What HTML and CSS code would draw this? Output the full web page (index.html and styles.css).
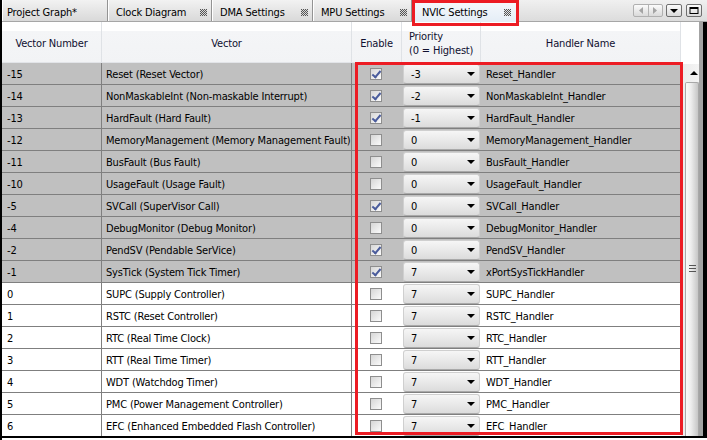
FILE: index.html
```html
<!DOCTYPE html>
<html>
<head>
<meta charset="utf-8">
<link rel="stylesheet" href="styles.css">
</head>
<body>
<div class="window">
  <div class="tabbar">
    <div class="tab t1"><span>Project Graph*</span></div>
    <div class="tab t2"><span>Clock Diagram</span><svg class="x" width="7" height="7" viewBox="0 0 7 7"><rect x="0" y="0" width="7" height="7" fill="#d8d8d8"/><path d="M0 0h1v1H0zM2 0h1v1H2zM4 0h1v1H4zM6 0h1v1H6zM1 1h1v1H1zM3 1h1v1H3zM5 1h1v1H5zM0 2h1v1H0zM2 2h1v1H2zM4 2h1v1H4zM6 2h1v1H6zM1 3h1v1H1zM3 3h1v1H3zM5 3h1v1H5zM0 4h1v1H0zM2 4h1v1H2zM4 4h1v1H4zM6 4h1v1H6zM1 5h1v1H1zM3 5h1v1H3zM5 5h1v1H5zM0 6h1v1H0zM2 6h1v1H2zM4 6h1v1H4zM6 6h1v1H6z" fill="#555"/></svg></div>
    <div class="tab t3"><span>DMA Settings</span><svg class="x" width="7" height="7" viewBox="0 0 7 7"><rect x="0" y="0" width="7" height="7" fill="#d8d8d8"/><path d="M0 0h1v1H0zM2 0h1v1H2zM4 0h1v1H4zM6 0h1v1H6zM1 1h1v1H1zM3 1h1v1H3zM5 1h1v1H5zM0 2h1v1H0zM2 2h1v1H2zM4 2h1v1H4zM6 2h1v1H6zM1 3h1v1H1zM3 3h1v1H3zM5 3h1v1H5zM0 4h1v1H0zM2 4h1v1H2zM4 4h1v1H4zM6 4h1v1H6zM1 5h1v1H1zM3 5h1v1H3zM5 5h1v1H5zM0 6h1v1H0zM2 6h1v1H2zM4 6h1v1H4zM6 6h1v1H6z" fill="#555"/></svg></div>
    <div class="tab t4"><span>MPU Settings</span><svg class="x" width="7" height="7" viewBox="0 0 7 7"><rect x="0" y="0" width="7" height="7" fill="#d8d8d8"/><path d="M0 0h1v1H0zM2 0h1v1H2zM4 0h1v1H4zM6 0h1v1H6zM1 1h1v1H1zM3 1h1v1H3zM5 1h1v1H5zM0 2h1v1H0zM2 2h1v1H2zM4 2h1v1H4zM6 2h1v1H6zM1 3h1v1H1zM3 3h1v1H3zM5 3h1v1H5zM0 4h1v1H0zM2 4h1v1H2zM4 4h1v1H4zM6 4h1v1H6zM1 5h1v1H1zM3 5h1v1H3zM5 5h1v1H5zM0 6h1v1H0zM2 6h1v1H2zM4 6h1v1H4zM6 6h1v1H6z" fill="#555"/></svg></div>
    <div class="tab t5 active"><span>NVIC Settings</span><svg class="x" width="7" height="7" viewBox="0 0 7 7"><rect x="0" y="0" width="7" height="7" fill="#e0e4e8"/><path d="M0 0h1v1H0zM2 0h1v1H2zM4 0h1v1H4zM6 0h1v1H6zM1 1h1v1H1zM3 1h1v1H3zM5 1h1v1H5zM0 2h1v1H0zM2 2h1v1H2zM4 2h1v1H4zM6 2h1v1H6zM1 3h1v1H1zM3 3h1v1H3zM5 3h1v1H5zM0 4h1v1H0zM2 4h1v1H2zM4 4h1v1H4zM6 4h1v1H6zM1 5h1v1H1zM3 5h1v1H3zM5 5h1v1H5zM0 6h1v1H0zM2 6h1v1H2zM4 6h1v1H4zM6 6h1v1H6z" fill="#555"/></svg></div>
    <div class="tabctrl">
      <div class="btn nav">
        <svg width="28" height="11" viewBox="0 0 28 11"><polygon points="9,2 9,9 5,5.5" fill="#a4a4a4"/><line x1="14.5" y1="0" x2="14.5" y2="11" stroke="#b4b4b4"/><polygon points="19,2 19,9 23,5.5" fill="#a4a4a4"/></svg>
      </div>
      <div class="btn drop">
        <svg width="14" height="11" viewBox="0 0 14 11"><polygon points="3,4 11,4 7,8" fill="#000"/></svg>
      </div>
      <div class="btn max">
        <svg width="14" height="11" viewBox="0 0 14 11"><rect x="3" y="2.5" width="8" height="6" fill="none" stroke="#000"/><rect x="3" y="2" width="8" height="2" fill="#000"/></svg>
      </div>
    </div>
  </div>

  <div class="panel">
    <div class="grid">
      <div class="head">
        <div class="hc">Vector Number</div>
        <div class="hc">Vector</div>
        <div class="hc">Enable</div>
        <div class="hc left"><span>Priority</span><span>(0 = Highest)</span></div>
        <div class="hc">Handler Name</div>
      </div>

      <div class="row sys"><div class="c num">-15</div><div class="c vec">Reset (Reset Vector)</div><div class="c en"><span class="cb on"></span></div><div class="c pr"><div class="dd"><span>-3</span><i class="arr"></i></div></div><div class="c hn">Reset_Handler</div></div>
      <div class="row sys"><div class="c num">-14</div><div class="c vec">NonMaskableInt (Non-maskable Interrupt)</div><div class="c en"><span class="cb on"></span></div><div class="c pr"><div class="dd"><span>-2</span><i class="arr"></i></div></div><div class="c hn">NonMaskableInt_Handler</div></div>
      <div class="row sys"><div class="c num">-13</div><div class="c vec">HardFault (Hard Fault)</div><div class="c en"><span class="cb on"></span></div><div class="c pr"><div class="dd"><span>-1</span><i class="arr"></i></div></div><div class="c hn">HardFault_Handler</div></div>
      <div class="row sys"><div class="c num">-12</div><div class="c vec">MemoryManagement (Memory Management Fault)</div><div class="c en"><span class="cb"></span></div><div class="c pr"><div class="dd"><span>0</span><i class="arr"></i></div></div><div class="c hn">MemoryManagement_Handler</div></div>
      <div class="row sys"><div class="c num">-11</div><div class="c vec">BusFault (Bus Fault)</div><div class="c en"><span class="cb"></span></div><div class="c pr"><div class="dd"><span>0</span><i class="arr"></i></div></div><div class="c hn">BusFault_Handler</div></div>
      <div class="row sys"><div class="c num">-10</div><div class="c vec">UsageFault (Usage Fault)</div><div class="c en"><span class="cb"></span></div><div class="c pr"><div class="dd"><span>0</span><i class="arr"></i></div></div><div class="c hn">UsageFault_Handler</div></div>
      <div class="row sys"><div class="c num">-5</div><div class="c vec">SVCall (SuperVisor Call)</div><div class="c en"><span class="cb on"></span></div><div class="c pr"><div class="dd"><span>0</span><i class="arr"></i></div></div><div class="c hn">SVCall_Handler</div></div>
      <div class="row sys"><div class="c num">-4</div><div class="c vec">DebugMonitor (Debug Monitor)</div><div class="c en"><span class="cb"></span></div><div class="c pr"><div class="dd"><span>0</span><i class="arr"></i></div></div><div class="c hn">DebugMonitor_Handler</div></div>
      <div class="row sys"><div class="c num">-2</div><div class="c vec">PendSV (Pendable SerVice)</div><div class="c en"><span class="cb on"></span></div><div class="c pr"><div class="dd"><span>0</span><i class="arr"></i></div></div><div class="c hn">PendSV_Handler</div></div>
      <div class="row sys"><div class="c num">-1</div><div class="c vec">SysTick (System Tick Timer)</div><div class="c en"><span class="cb on"></span></div><div class="c pr"><div class="dd"><span>7</span><i class="arr"></i></div></div><div class="c hn">xPortSysTickHandler</div></div>
      <div class="row"><div class="c num">0</div><div class="c vec">SUPC (Supply Controller)</div><div class="c en"><span class="cb"></span></div><div class="c pr"><div class="dd"><span>7</span><i class="arr"></i></div></div><div class="c hn">SUPC_Handler</div></div>
      <div class="row"><div class="c num">1</div><div class="c vec">RSTC (Reset Controller)</div><div class="c en"><span class="cb"></span></div><div class="c pr"><div class="dd"><span>7</span><i class="arr"></i></div></div><div class="c hn">RSTC_Handler</div></div>
      <div class="row"><div class="c num">2</div><div class="c vec">RTC (Real Time Clock)</div><div class="c en"><span class="cb"></span></div><div class="c pr"><div class="dd"><span>7</span><i class="arr"></i></div></div><div class="c hn">RTC_Handler</div></div>
      <div class="row"><div class="c num">3</div><div class="c vec">RTT (Real Time Timer)</div><div class="c en"><span class="cb"></span></div><div class="c pr"><div class="dd"><span>7</span><i class="arr"></i></div></div><div class="c hn">RTT_Handler</div></div>
      <div class="row"><div class="c num">4</div><div class="c vec">WDT (Watchdog Timer)</div><div class="c en"><span class="cb"></span></div><div class="c pr"><div class="dd"><span>7</span><i class="arr"></i></div></div><div class="c hn">WDT_Handler</div></div>
      <div class="row"><div class="c num">5</div><div class="c vec">PMC (Power Management Controller)</div><div class="c en"><span class="cb"></span></div><div class="c pr"><div class="dd"><span>7</span><i class="arr"></i></div></div><div class="c hn">PMC_Handler</div></div>
      <div class="row"><div class="c num">6</div><div class="c vec">EFC (Enhanced Embedded Flash Controller)</div><div class="c en"><span class="cb"></span></div><div class="c pr"><div class="dd"><span>7</span><i class="arr"></i></div></div><div class="c hn">EFC_Handler</div></div>
    </div>
    <div class="scroll">
      <div class="sb-head"></div>
      <div class="sb-up"><i class="uparr"></i></div>
      <div class="sb-thumb"><i class="grip"></i></div>
    </div>
  </div>

  <div class="mark mark-tab"></div>
  <div class="mark mark-table"></div>
</div>
</body>
</html>
```

FILE: styles.css
```css
* { box-sizing: border-box; }

body {
  margin: 0;
  background: #fff;
  font-family: "DejaVu Sans Condensed", "Liberation Sans", sans-serif;
  font-size: 11px;
  letter-spacing: -0.17px;
  color: #000;
}

.window {
  position: relative;
  width: 707px;
  height: 440px;
  overflow: hidden;
  border-left: 2px solid #000;
}

/* ---------- tab bar ---------- */
.tabbar {
  height: 22px;
  display: flex;
  background: linear-gradient(#f0f0f0, #dcdcdc);
  border-bottom: 1px solid #a6a6a6;
}

.tab {
  display: flex;
  align-items: center;
  justify-content: space-between;
  padding: 3px 4px 0 8px;
  background: linear-gradient(#f2f2f2, #d9d9d9);
  border-right: 1px solid #939393;
  box-shadow: inset 1px 0 #fff;
  white-space: nowrap;
}

.t1 { width: 106px; padding-left: 5px; }
.t2 { width: 104px; }
.t3 { width: 101px; }
.t4 { width: 99px; }
.t5 { width: 107px; padding-left: 10px; padding-right: 7px; }

.tab.active {
  background: linear-gradient(#f7fafd, #e4edf6);
  margin-bottom: -1px;
}

.x { display: block; }

.tabctrl {
  margin-left: auto;
  display: flex;
  align-items: flex-start;
  padding: 4px 5px 0 0;
  gap: 3px;
}

.btn {
  height: 13px;
  border-radius: 2px;
  background: linear-gradient(#fbfbfb, #dadada);
  display: flex;
  align-items: center;
  justify-content: center;
}
.btn svg { display: block; }
.nav { width: 30px; border: 1px solid #b0b0b0; }
.drop { width: 16px; border: 1px solid #6e6e6e; }
.max { width: 16px; border: 1px solid #6e6e6e; margin-left: 1px; }

/* ---------- panel ---------- */
.panel {
  display: flex;
  height: 416px;
  border-right: 4px solid #000;
  border-bottom: 2px solid #000;
  overflow: hidden;
}

.grid {
  width: 679px;
  flex: none;
}

.head {
  display: grid;
  grid-template-columns: 100px 250px 50px 79px 200px;
  height: 41px;
  background: linear-gradient(#fff 0, #fff 9px, #f4f5f7 9px, #f2f3f5 100%);
  border-bottom: 1px solid #e2e4e8;
}

.hc {
  display: flex;
  align-items: center;
  justify-content: center;
  border-right: 1px solid #dfe2e6;
  color: #101030;
  padding-top: 3px;
}
.hc.left {
  flex-direction: column;
  align-items: flex-start;
  padding-left: 7px;
  line-height: 14px;
}

.row {
  display: grid;
  grid-template-columns: 100px 250px 50px 79px 200px;
  height: 22px;
  border-bottom: 1px solid #7f7f7f;
  background: #fff;
}
.row.sys { background: #c0c0c0; }

.c {
  display: flex;
  align-items: center;
  white-space: nowrap;
  overflow: hidden;
  padding-top: 1px;
}
.num { padding-left: 5px; border-right: 1px solid #7f7f7f; }
.vec { padding-left: 4px; border-right: 1px solid #7f7f7f; }
.en { padding-left: 18px; }
.hn { padding-left: 5px; }

.cb {
  width: 12px;
  height: 12px;
  border: 1px solid #8e8e8e;
  background: linear-gradient(135deg, #d6d6d6, #fbfbfb);
  position: relative;
}
.cb.on::after {
  content: "";
  position: absolute;
  left: 3px;
  top: 0px;
  width: 3px;
  height: 7px;
  border-right: 2px solid #4a5c9c;
  border-bottom: 2px solid #4a5c9c;
  transform: rotate(40deg);
}

.pr { padding-left: 1px; padding-top: 0; }
.dd {
  width: 77px;
  height: 20px;
  border-radius: 3px;
  border: 1px solid #cfcfcf;
  border-bottom-color: #a9a9a9;
  background: linear-gradient(#f6f6f6, #dcdcdc);
  display: flex;
  align-items: center;
  justify-content: space-between;
  padding: 1px 4px 0 7px;
}
.arr {
  width: 0;
  height: 0;
  border-left: 4px solid transparent;
  border-right: 4px solid transparent;
  border-top: 4px solid #000;
}

/* ---------- scrollbar ---------- */
.scroll {
  width: 22px;
  flex: none;
  display: flex;
  flex-direction: column;
  background: linear-gradient(90deg, #ebebeb, #f4f4f4);
  border-right: 4px solid #a3a3a3;
}
.sb-head {
  height: 42px;
  background: #fff;
}
.sb-up {
  height: 18px;
  padding-left: 9px;
  padding-top: 7px;
}
.uparr {
  display: block;
  width: 0;
  height: 0;
  border-left: 4px solid transparent;
  border-right: 4px solid transparent;
  border-bottom: 4px solid #000;
}
.sb-thumb {
  flex: 1;
  margin-left: 4px;
  border: 1px solid #a8a8a8;
  border-bottom: none;
  border-radius: 2px 2px 0 0;
  background: linear-gradient(90deg, #fafafa, #eeeeee 40%, #c6c6c6);
  display: flex;
  justify-content: center;
  padding-top: 182px;
}
.grip {
  display: block;
  width: 7px;
  height: 8px;
  background: repeating-linear-gradient(#555 0, #555 1px, transparent 1px, transparent 3px);
}

/* ---------- annotation boxes ---------- */
.mark {
  position: absolute;
  border: 3px solid #ec1c24;
  pointer-events: none;
}
.mark-tab { left: 410px; top: 0; width: 107px; height: 26px; }
.mark-table { left: 353px; top: 62px; width: 328px; height: 373px; }
```
